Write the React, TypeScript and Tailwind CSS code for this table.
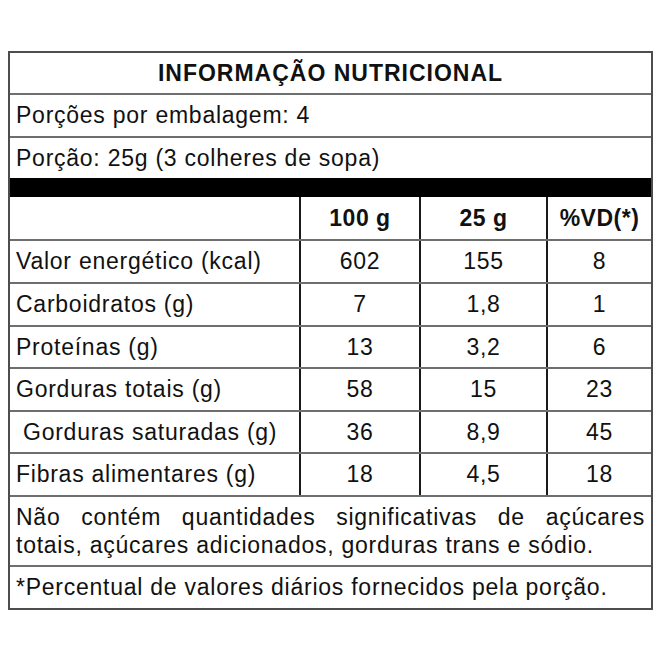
const font = "font-['Liberation_Sans',Arial,sans-serif]";

type Row = { label: string; a: string; b: string; vd: string; h: string; indent?: boolean };

const rows: Row[] = [
  { label: "Valor energético (kcal)", a: "602", b: "155", vd: "8", h: "h-[43px]" },
  { label: "Carboidratos (g)", a: "7", b: "1,8", vd: "1", h: "h-[43px]" },
  { label: "Proteínas (g)", a: "13", b: "3,2", vd: "6", h: "h-[42px]" },
  { label: "Gorduras totais (g)", a: "58", b: "15", vd: "23", h: "h-[43px]" },
  { label: "Gorduras saturadas (g)", a: "36", b: "8,9", vd: "45", h: "h-[42px]", indent: true },
  { label: "Fibras alimentares (g)", a: "18", b: "4,5", vd: "18", h: "h-[43px]" },
];

const hline = "border-b-2 border-[#6e6e6e]";
const vcell = "flex items-center justify-center border-l-2 border-[#1a1a1a]";

function TableRow({ row }: { row: Row }) {
  return (
    <div className={`flex ${row.h} ${hline}`}>
      <div className={`flex w-[289px] items-center ${row.indent ? "pl-[13px]" : "pl-[6px]"}`}>
        {row.label}
      </div>
      <div className={`${vcell} w-[120px]`}>{row.a}</div>
      <div className={`${vcell} w-[127px]`}>{row.b}</div>
      <div className={`${vcell} flex-1`}>{row.vd}</div>
    </div>
  );
}

export default function App() {
  return (
    <div className={`min-h-[660px] bg-white pt-[51px] text-[23px] leading-none tracking-[0.75px] text-[#111] ${font}`}>
      <div className="ml-[8px] w-[645px] border-2 border-[#4d4d4d]">
        <div className={`flex h-[42px] items-center justify-center font-bold tracking-[1px] ${hline}`}>
          INFORMAÇÃO NUTRICIONAL
        </div>
        <div className={`flex h-[43px] items-center pl-[6px] ${hline}`}>Porções por embalagem: 4</div>
        <div className="flex h-[40px] items-center pl-[6px]">Porção: 25g (3 colheres de sopa)</div>
        <div className="h-[19px] bg-black" />

        <div className={`flex h-[44px] font-bold tracking-[0.5px] ${hline}`}>
          <div className="w-[289px]" />
          <div className={`${vcell} w-[120px]`}>100 g</div>
          <div className={`${vcell} w-[127px]`}>25 g</div>
          <div className={`${vcell} flex-1`}>%VD(*)</div>
        </div>

        {rows.map((r) => (
          <TableRow key={r.label} row={r} />
        ))}

        <div className={`flex h-[70px] flex-col justify-center px-[6px] leading-[28px] ${hline}`}>
          <div className="text-justify [text-align-last:justify]">
            Não contém quantidades significativas de açúcares
          </div>
          <div>totais, açúcares adicionados, gorduras trans e sódio.</div>
        </div>
        <div className="flex h-[41px] items-center pl-[6px]">
          *Percentual de valores diários fornecidos pela porção.
        </div>
      </div>
    </div>
  );
}
